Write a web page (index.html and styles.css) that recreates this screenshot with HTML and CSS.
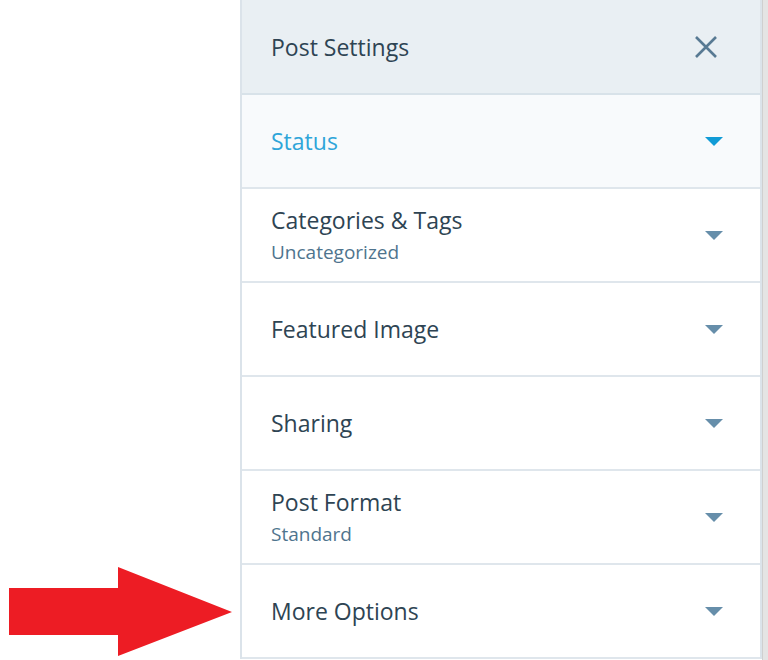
FILE: index.html
```html
<!DOCTYPE html>
<html>
<head>
<meta charset="utf-8">
<link rel="stylesheet" href="styles.css">
</head>
<body>
<div class="page">
  <div class="gutter">
    <svg class="pointer" width="224" height="90" viewBox="0 0 224 90">
      <polygon fill="#ed1c24" points="0,21 109,21 109,0 223,45 109,89 109,68 0,68"/>
    </svg>
  </div>
  <div class="panel">
    <div class="header">
      <span class="header-title">Post Settings</span>
      <svg class="close" width="24" height="24" viewBox="0 0 24 24">
        <path d="M2 2 L22 22 M22 2 L2 22" stroke="#587a93" stroke-width="2.6" fill="none"/>
      </svg>
    </div>
    <div class="row row-active">
      <div class="row-text"><span class="row-title">Status</span></div>
      <span class="caret"></span>
    </div>
    <div class="row">
      <div class="row-text"><span class="row-title">Categories &amp; Tags</span><span class="row-sub">Uncategorized</span></div>
      <span class="caret"></span>
    </div>
    <div class="row">
      <div class="row-text"><span class="row-title">Featured Image</span></div>
      <span class="caret"></span>
    </div>
    <div class="row">
      <div class="row-text"><span class="row-title">Sharing</span></div>
      <span class="caret"></span>
    </div>
    <div class="row">
      <div class="row-text"><span class="row-title">Post Format</span><span class="row-sub">Standard</span></div>
      <span class="caret"></span>
    </div>
    <div class="row">
      <div class="row-text"><span class="row-title">More Options</span></div>
      <span class="caret"></span>
    </div>
  </div>
  <div class="scroll"></div>
</div>
</body>
</html>
```
FILE: styles.css
```css
html, body {
  margin: 0;
  padding: 0;
  background: #ffffff;
}
body {
  font-family: "Open Sans", "Noto Sans", sans-serif;
  color: #2e4453;
}
.page {
  display: flex;
  height: 660px;
  width: 768px;
  overflow: hidden;
}
.gutter {
  width: 240px;
  flex: none;
  display: flex;
  flex-direction: column;
  justify-content: flex-end;
  padding-bottom: 3px;
  box-sizing: border-box;
}
.pointer {
  display: block;
  margin-left: 9px;
}
.panel {
  width: 522px;
  flex: none;
  border-left: 2px solid #dbe3ea;
  border-right: 2px solid #dbe3ea;
  box-sizing: border-box;
  display: flex;
  flex-direction: column;
  align-self: flex-start;
}
.scroll {
  flex: 1;
  background: #e4e4e4;
  border-left: 1px solid #cfcfcf;
}
.header {
  height: 93px;
  background: #e9eff3;
  border-bottom: 2px solid #d8e2e9;
  display: flex;
  align-items: center;
  justify-content: space-between;
  padding: 0 42px 0 29px;
}
.header-title {
  font-size: 23px;
  color: #2e4453;
}
.close {
  display: block;
}
.row {
  height: 92px;
  border-bottom: 2px solid #dfe6ec;
  display: flex;
  align-items: center;
  justify-content: space-between;
  padding: 0 37px 0 29px;
  background: #ffffff;
}
.row-active {
  background: #f8fafc;
}
.row-text {
  display: flex;
  flex-direction: column;
  gap: 4px;
}
.row-title {
  font-size: 23px;
  line-height: 30px;
  color: #2e4453;
}
.row-active .row-title {
  color: #2fa5d9;
}
.row-sub {
  font-size: 19px;
  line-height: 26px;
  color: #4f748e;
}
.caret {
  width: 0;
  height: 0;
  border-left: 9px solid transparent;
  border-right: 9px solid transparent;
  border-top: 9px solid #668eaa;
}
.row-active .caret {
  border-top-color: #119bd6;
}
```
